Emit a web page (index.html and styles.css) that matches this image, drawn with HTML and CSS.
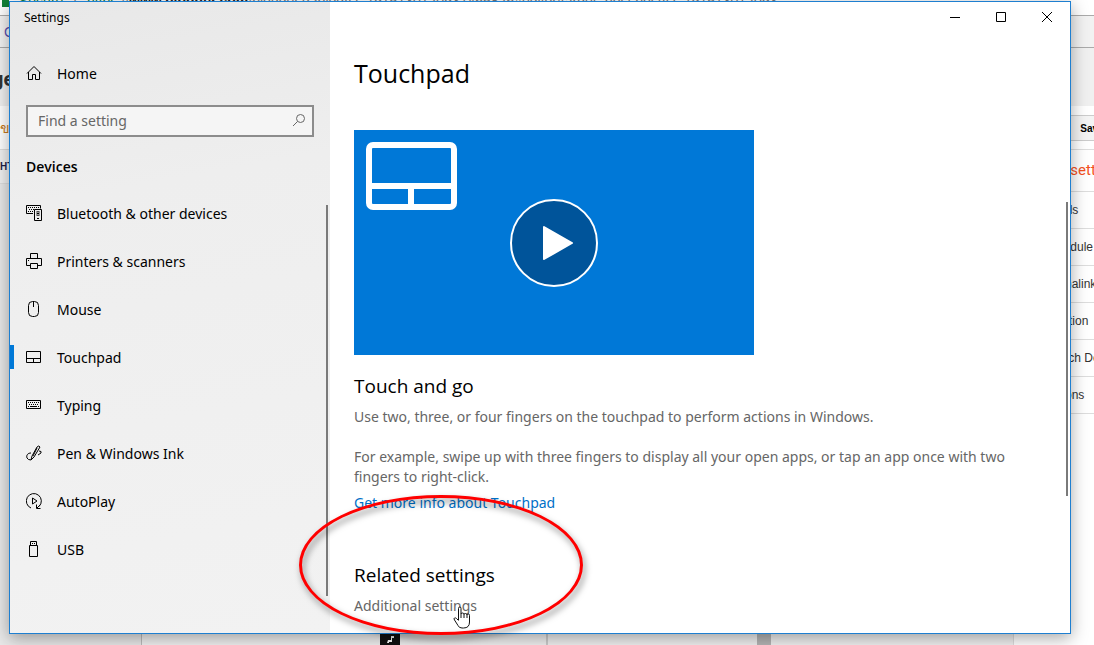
FILE: index.html
```html
<!DOCTYPE html>
<html lang="en">
<head>
    <meta charset="UTF-8">
    <meta name="viewport" content="width=device-width, initial-scale=1.0">
    <title>Settings</title>
    <link rel="stylesheet" href="styles.css">
</head>
<body>

    <!-- Browser page behind the window -->
    <div class="backdrop">
        <div class="address-bar">
            <span class="lock"></span>
            <span class="secure">Secure</span>
            <span>|</span>
            <span class="address"><span class="secure">https</span>://<b>www.blogger.com</b>/blogger.g?blogID=7915130120937465826#editor/target=post;postID=791513012093</span>
        </div>
        <div class="bookmarks">G</div>
        <div class="blog-header">ge</div>
        <div class="post-bar">ขป</div>
        <div class="tool-bar">
            <span>HTML</span>
            <button class="save-btn">Save</button>
        </div>
        <div class="editor">
            <div class="editor-margin"></div>
            <div class="editor-page first">
                <span class="black-box">
                    <svg width="20" height="12" viewBox="0 0 20 12"><path d="M8 7h3V3h3v2h-2v4H9v1H7z" fill="#fff"/></svg>
                </span>
            </div>
            <div class="editor-page second"></div>
            <div class="editor-scroll"></div>
            <div class="editor-fill"></div>
            <div class="post-settings">
                <h3>Post settings</h3>
                <ul>
                    <li>Labels</li>
                    <li>Schedule</li>
                    <li>Permalink</li>
                    <li>Location</li>
                    <li>Search Description</li>
                    <li>Options</li>
                </ul>
            </div>
        </div>
    </div>

    <!-- Settings window -->
    <div class="window">
        <aside class="sidebar">
            <div class="title">Settings</div>
            <a class="nav-item home" href="#">
                <svg class="icon" viewBox="0 0 16 16"><path d="M1 8.500 8 1.500l7 7M2.500 7v7.500h4v-5h3v5h4V7"/></svg>
                Home
            </a>
            <div class="search">
                <input type="text" placeholder="Find a setting" aria-label="Find a setting">
                <svg class="search-icon" viewBox="0 0 14 14"><circle cx="8.500" cy="5.500" r="4"/><path d="M5.500 8.500 1 13"/></svg>
            </div>
            <h2>Devices</h2>
            <nav>
                <a class="nav-item" href="#">
                    <svg class="icon" viewBox="0 0 16 16"><path d="M7 8.500H.5v-8h14v3"/><path d="M2 2.500h11M3 4.500h5M2 6.500h1M4 6.500h3" stroke-dasharray="1 1"/><path d="M8.500 4.500h7v11h-7z"/><path d="M10 6h4v5h-4z" fill="#999" stroke="none"/><path d="M12 6v1M11 8.500h2M12 10v1M11 13.500h2"/></svg>
                    Bluetooth &amp; other devices
                </a>
                <a class="nav-item" href="#">
                    <svg class="icon" viewBox="0 0 16 16"><path d="M4.500 5.500v-5h7v5M4.500 12.500h-4v-7h15v7h-4M4.500 10.500h7v5h-7zM2 7.500h1"/></svg>
                    Printers &amp; scanners
                </a>
                <a class="nav-item" href="#">
                    <svg class="icon" viewBox="0 0 16 16"><rect x="2.500" y=".5" width="10" height="15" rx="4"/><path d="M7.500 1v5"/></svg>
                    Mouse
                </a>
                <a class="nav-item active" href="#">
                    <svg class="icon" viewBox="0 0 16 16"><path d="M.5 2.500h14v11H.5zM.5 9.500h14M7.500 9.500v4"/></svg>
                    Touchpad
                </a>
                <a class="nav-item" href="#">
                    <svg class="icon" viewBox="0 0 16 16"><path d="M.5 3.500h14v8H.5z"/><path d="M2 5.500h11M3 7.500h10" stroke-dasharray="1 1"/><path d="M2 9.500h1M4 9.500h7M12 9.500h1"/></svg>
                    Typing
                </a>
                <a class="nav-item" href="#">
                    <svg class="icon" viewBox="0 0 16 16"><path d="M5 15l1-4 5-9q2-2 3 0L8 12zM5 8C2 8 0 10 1 13q1 2 4 2M13 6q3 0 2 2l-3 2M11 3l-4 8"/></svg>
                    Pen &amp; Windows Ink
                </a>
                <a class="nav-item" href="#">
                    <svg class="icon" viewBox="0 0 16 16"><path d="M5 15A7.500 7.500 0 1 1 13 13.500M10.500 11.500v4h4M11 15l3-3M6.500 5v6l4.500-3z"/></svg>
                    AutoPlay
                </a>
                <a class="nav-item" href="#">
                    <svg class="icon" viewBox="0 0 16 16"><path d="M4.500 4.500v-4h6v4M3.500 4.500h8v11h-8zM6 2.500h1M8 2.500h1"/></svg>
                    USB
                </a>
            </nav>
            <span class="scrollbar"></span>
        </aside>

        <main class="content">
            <div class="window-buttons">
                <button aria-label="Minimize"><svg width="10" height="10" viewBox="0 0 10 10"><path d="M0 5.500h10"/></svg></button>
                <button aria-label="Maximize"><svg width="10" height="10" viewBox="0 0 10 10"><path d="M.5 .5h9v9h-9z"/></svg></button>
                <button aria-label="Close"><svg width="10" height="10" viewBox="0 0 10 10"><path d="M0 0l10 10M10 0 0 10"/></svg></button>
            </div>
            <h1>Touchpad</h1>
            <div class="video">
                <svg class="pad" width="91" height="68" viewBox="0 0 91 68"><rect x="3" y="3" width="85" height="62" rx="4"/><path d="M3 44h85M45 44v21"/></svg>
                <button class="play" aria-label="Play">
                    <svg width="32" height="36" viewBox="0 0 32 36"><path d="M2 2 30 18 2 34z" fill="#fff" stroke="#fff" stroke-width="2" stroke-linejoin="round"/></svg>
                </button>
            </div>
            <h3>Touch and go</h3>
            <p>Use two, three, or four fingers on the touchpad to perform actions in Windows.</p>
            <p>For example, swipe up with three fingers to display all your open apps, or tap an app once with two fingers to right-click.</p>
            <a class="info-link" href="#">Get more info about Touchpad</a>
            <h3 class="related">Related settings</h3>
            <a class="additional" href="#">Additional settings</a>
            <span class="scrollbar"></span>
        </main>
    </div>

    <!-- Red marker and mouse pointer -->
    <div class="marker"></div>
    <svg class="pointer" width="18" height="24" viewBox="0 0 18 24"><path d="M5.500 14V2.500q0-1.500 1.300-1.500T8 2.500V8q0-1 1.500-1T11 8.500q0-1 1.500-1T14 9q0-1 1.300-1t1.200 1.500V16q0 6-6 6H9q-3 0-4-2.500L1.500 14q-1-1.500 0-2t2 .5l2 2M8 8v4M11 8.500V12M14 9v3"/></svg>

</body>
</html>
```
FILE: styles.css
```css
/* Global Styles */
* {
    box-sizing: border-box;
}

body {
    margin: 0;
    height: 100vh;
    overflow: hidden;
    position: relative;
    font-family: "Noto Sans", "Open Sans", sans-serif;
    font-size: 14px;
    color: #000;
    background-color: #fff;
}

h1, h2, h3, p, ul {
    margin: 0;
    padding: 0;
    font-weight: normal;
}

a {
    color: inherit;
    text-decoration: none;
}

button {
    border: none;
    padding: 0;
    background: none;
    font-family: inherit;
}

svg {
    fill: none;
    stroke: #000;
}

/* Browser page behind the window */
.backdrop {
    height: 100%;
    overflow: hidden;
    display: flex;
    flex-direction: column;
    font-family: "Liberation Sans", Arial, sans-serif;
    font-size: 12px;
    color: #333;
}

.address-bar {
    height: 16px;
    flex: none;
    padding-left: 2px;
    display: flex;
    align-items: flex-start;
    gap: 10px;
    line-height: 2px;
    font-size: 14px;
    white-space: nowrap;
    color: #777;
    border-bottom: 1px solid #aaa;
}

.address-bar b {
    color: #222;
}

.address-bar .secure {
    color: #0b8043;
}

.lock {
    width: 7px;
    height: 7px;
    background-color: #128038;
}

.bookmarks {
    height: 32px;
    flex: none;
    padding-left: 4px;
    line-height: 32px;
    font-size: 14px;
    color: #5b4fb0;
    background-color: #f2f2f2;
    border-bottom: 1px solid #aaa;
}

.blog-header {
    height: 58px;
    flex: none;
    line-height: 62px;
    font-family: Roboto, sans-serif;
    font-size: 20px;
    font-weight: bold;
    text-indent: -8px;
    background-color: #f0f0f0;
}

.post-bar {
    height: 44px;
    flex: none;
    line-height: 44px;
    font-size: 14px;
    color: #c77a1c;
    border-bottom: 1px solid #ddd;
}

.tool-bar {
    height: 34px;
    flex: none;
    display: flex;
    justify-content: space-between;
    align-items: center;
    font-size: 10px;
    font-weight: bold;
    color: #1f1f4a;
    background-color: #f0f0f0;
    border-bottom: 1px solid #ddd;
}

.save-btn {
    position: absolute;
    top: 115px;
    right: -26px;
    width: 56px;
    height: 26px;
    border: 1px solid #ccc;
    background-color: #f4f4f4;
    font-size: 10px;
    font-weight: bold;
}

.editor {
    flex: 1;
    display: flex;
    background-color: #f0f0f0;
}

.editor-margin {
    width: 142px;
    background-color: #e8e8e8;
    border-right: 1px solid #bbb;
}

.editor-page {
    display: flex;
    align-items: flex-end;
}

.first {
    width: 406px;
    padding-left: 238px;
    border-right: 2px solid #ccc;
}

.second {
    width: 209px;
}

.black-box {
    height: 12px;
    background-color: #111;
}

.black-box svg {
    display: block;
    stroke: none;
}

.editor-scroll {
    width: 14px;
    background-color: #b5b5b5;
}

.editor-fill {
    flex: 1;
}

.post-settings {
    width: 81px;
    margin-top: -34px;
    overflow: hidden;
    white-space: nowrap;
    background-color: #fff;
    border-left: 1px solid #ddd;
}

.post-settings h3 {
    height: 42px;
    padding-left: 22px;
    line-height: 40px;
    font-family: Roboto, sans-serif;
    font-size: 15px;
    color: #f4511e;
    border-bottom: 1px solid #ddd;
}

.post-settings li {
    height: 37px;
    padding-left: 29px;
    line-height: 36px;
    list-style: none;
    border-bottom: 1px solid #ddd;
}

/* Settings window */
.window {
    position: absolute;
    top: 1px;
    right: 23px;
    bottom: 11px;
    left: 9px;
    display: flex;
    border: 1px solid #1e7fd0;
    background-color: #fff;
    box-shadow: 0 4px 16px rgba(0, 0, 0, 0.35);
}

.sidebar {
    position: relative;
    width: 320px;
    flex: none;
    background: linear-gradient(170deg, #e8e8e8, #eeeeee 30%, #f2f2f2);
}

.title {
    height: 48px;
    padding: 6px 14px;
    line-height: 20px;
    font-size: 12px;
}

.nav-item {
    height: 48px;
    padding-left: 16px;
    display: flex;
    align-items: center;
    gap: 15px;
}

.nav-item.home {
    height: 46px;
}

.icon {
    width: 16px;
    height: 16px;
    flex: none;
}

.search {
    position: relative;
    margin: 9px 16px 0;
}

.search input {
    display: block;
    width: 100%;
    height: 32px;
    padding: 0 10px 2px;
    border: 2px solid #8c8c8c;
    background-color: #f5f5f5;
    font-family: inherit;
    font-size: 14px;
}

.search input::placeholder {
    color: #666;
}

.search-icon {
    position: absolute;
    top: 8px;
    right: 8px;
    width: 14px;
    height: 14px;
    stroke: #666;
}

.sidebar h2 {
    height: 52px;
    padding-left: 16px;
    line-height: 60px;
    font-family: "Open Sans", sans-serif;
    font-size: 14px;
    font-weight: 600;
}

.active {
    background: linear-gradient(#0078d7, #0078d7) no-repeat left center / 4px 24px;
}

.scrollbar {
    position: absolute;
    top: 203px;
    right: 2px;
    bottom: 37px;
    width: 2px;
    background-color: #7a7a7a;
}

.content {
    position: relative;
    flex: 1;
    padding-left: 24px;
    color: #666;
}

.content .scrollbar {
    top: 200px;
    bottom: 137px;
}

.window-buttons {
    height: 30px;
    display: flex;
    justify-content: flex-end;
}

.window-buttons button {
    width: 46px;
}

h1 {
    height: 98px;
    line-height: 82px;
    font-family: "Open Sans", sans-serif;
    font-size: 25px;
    color: #000;
}

/* Video box */
.video {
    position: relative;
    width: 400px;
    height: 225px;
    display: flex;
    align-items: center;
    justify-content: center;
    background-color: #0078d7;
}

.pad {
    position: absolute;
    top: 12px;
    left: 12px;
    stroke: #fff;
    stroke-width: 6;
}

.play {
    width: 88px;
    height: 88px;
    padding: 0 0 0 8px;
    display: flex;
    align-items: center;
    justify-content: center;
    border: 2px solid #fff;
    border-radius: 50%;
    background-color: #00549a;
}

.content h3 {
    margin-top: 17px;
    line-height: 28px;
    font-family: "Open Sans", sans-serif;
    font-size: 19px;
    color: #000;
}

.content p {
    max-width: 680px;
    margin: 7px 0 20px;
    line-height: 20px;
}

.content p + p {
    margin: 0 0 6px;
}

.content a {
    display: block;
    line-height: 20px;
}

.content .info-link {
    color: #0070c8;
}

.content .related {
    margin: 48px 0 7px;
}

/* Marker and pointer */
.marker {
    position: absolute;
    top: 495px;
    left: 299px;
    width: 284px;
    height: 140px;
    border: 3px solid #f00;
    border-radius: 50%;
    filter: drop-shadow(2px 4px 3px rgba(0, 0, 0, 0.5));
}

.pointer {
    position: absolute;
    top: 606px;
    left: 453px;
    stroke: #111;
}

.pointer path {
    fill: #fff;
}
```
